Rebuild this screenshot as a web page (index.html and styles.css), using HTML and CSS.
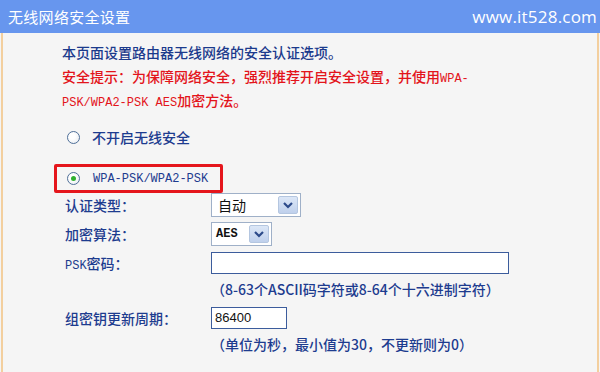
FILE: index.html
```html
<!DOCTYPE html>
<html lang="zh">
<head>
<meta charset="utf-8">
<title>无线网络安全设置</title>
<link rel="stylesheet" href="styles.css">
</head>
<body>
<div class="page">
  <div class="header">
    <span class="title">无线网络安全设置</span>
    <span class="site">www.it528.com</span>
  </div>
  <div class="main">
    <div class="intro">
      <p class="line blue">本页面设置路由器无线网络的安全认证选项。</p>
      <p class="line red">安全提示：为保障网络安全，强烈推荐开启安全设置，并使用<span class="mono">WPA-</span></p>
      <p class="line red"><span class="mono">PSK/WPA2-PSK AES</span>加密方法。</p>
    </div>
    <div class="option first">
      <span class="radio"></span>
      <span class="opt-text">不开启无线安全</span>
    </div>
    <div class="highlight">
      <div class="option">
        <span class="radio checked"></span>
        <span class="opt-text mono">WPA-PSK/WPA2-PSK</span>
      </div>
    </div>
    <div class="form">
      <div class="row r1">
        <span class="label">认证类型：</span>
        <div class="select wide"><span class="sel-text">自动</span><span class="arrow"><svg width="12" height="8" viewBox="0 0 12 8"><path d="M2 2 L6 6 L10 2" fill="none" stroke="#2c4a8a" stroke-width="2.2"/></svg></span></div>
      </div>
      <div class="row r2">
        <span class="label">加密算法：</span>
        <div class="select narrow"><span class="sel-text mono">AES</span><span class="arrow"><svg width="12" height="8" viewBox="0 0 12 8"><path d="M2 2 L6 6 L10 2" fill="none" stroke="#2c4a8a" stroke-width="2.2"/></svg></span></div>
      </div>
      <div class="row r3">
        <span class="label"><span class="mono">PSK</span>密码：</span>
        <div class="input long"></div>
      </div>
      <div class="row hint">
        <span class="label"></span>
        <span class="hint-text">（8-63个ASCII码字符或8-64个十六进制字符）</span>
      </div>
      <div class="row r4">
        <span class="label">组密钥更新周期：</span>
        <div class="input short">86400</div>
      </div>
      <div class="row hint">
        <span class="label"></span>
        <span class="hint-text">（单位为秒，最小值为30，不更新则为0）</span>
      </div>
    </div>
  </div>
</div>
</body>
</html>
```
FILE: styles.css
```css
* { box-sizing: border-box; }
html, body { margin: 0; padding: 0; }
body {
  width: 600px;
  height: 372px;
  overflow: hidden;
  background: #f4f4f4;
  font-family: "Noto Sans CJK TC", "Noto Sans CJK SC", "Noto Sans", sans-serif;
  font-size: 14px;
  font-weight: 500;
  color: #1d3c8f;
}
.page { width: 600px; height: 372px; display: flex; flex-direction: column; }
.header {
  height: 33px;
  background: #6796ee;
  display: flex;
  align-items: center;
  justify-content: space-between;
  padding: 0 3px 0 8px;
  color: #fff;
}
.title { font-size: 15px; font-weight: 400; letter-spacing: 0.3px; }
.site { font-family: "Open Sans", "Liberation Sans", sans-serif; font-weight: 400; font-size: 17px; letter-spacing: 0.2px; }
.main {
  flex: 1;
  margin: 0 1px;
  border-left: 2px solid #f3cf9e;
  border-right: 2px solid #f3cf9e;
  background: #f5f5f5;
  padding-top: 7px;
}
.intro { padding-left: 59px; }
.line { margin: 0; height: 24px; line-height: 24px; white-space: nowrap; }
.blue { color: #1b3a8c; }
.red { color: #e3141b; }
.mono { font-family: "Liberation Mono", "DejaVu Sans Mono", monospace; font-size: 12px; font-weight: 400; }
.option {
  display: flex;
  align-items: center;
  height: 23px;
  white-space: nowrap;
}
.option.first { margin-top: 13px; padding-left: 64px; height: 24px; }
.highlight {
  margin: 15px 0 0 51px;
  width: 169px;
  height: 29px;
  border: 3px solid #e5161c;
  border-radius: 2px;
  padding-left: 10px;
}
.radio {
  width: 13px;
  height: 13px;
  border-radius: 50%;
  border: 1px solid #4f6f98;
  background: radial-gradient(circle at 40% 40%, #ffffff 30%, #e3e8ee 100%);
  display: flex;
  align-items: center;
  justify-content: center;
  flex: none;
}
.radio.checked::after {
  content: "";
  width: 5px;
  height: 5px;
  border-radius: 50%;
  background: #30b030;
}
.opt-text { margin-left: 12px; }
.option .opt-text.mono { margin-left: 13px; color: #1d3c8f; }
.form { padding-left: 62px; }
.row { display: grid; grid-template-columns: 146px auto; align-items: center; white-space: nowrap; }
.r1 { height: 24px; }
.r2 { height: 24px; margin-top: 5px; }
.r3 { height: 22px; margin-top: 6px; }
.hint { height: 24px; margin-top: 3px; }
.r4 { height: 22px; margin-top: 6px; }
.select {
  height: 24px;
  border: 1px solid #9fb0c8;
  background: #fff;
  display: flex;
  align-items: center;
  justify-content: space-between;
  padding: 0 2px 0 6px;
  color: #111;
  font-weight: 400;
}
.select.wide { width: 90px; }
.select.narrow { width: 61px; padding-left: 4px; }
.sel-text.mono { font-size: 12px; font-weight: bold; }
.arrow {
  width: 20px;
  height: 18px;
  border: 1px solid #b4c6e0;
  border-radius: 2px;
  background: linear-gradient(#dce7f7, #bfd0ec);
  display: flex;
  align-items: center;
  justify-content: center;
}
.input {
  height: 22px;
  border: 1px solid #3c5c9c;
  background: #fff;
  font-family: "Liberation Sans", "DejaVu Sans", sans-serif;
  font-size: 13px;
  font-weight: 400;
  color: #111;
  line-height: 20px;
  padding-left: 3px;
}
.input.long { width: 298px; }
.input.short { width: 76px; }
```
